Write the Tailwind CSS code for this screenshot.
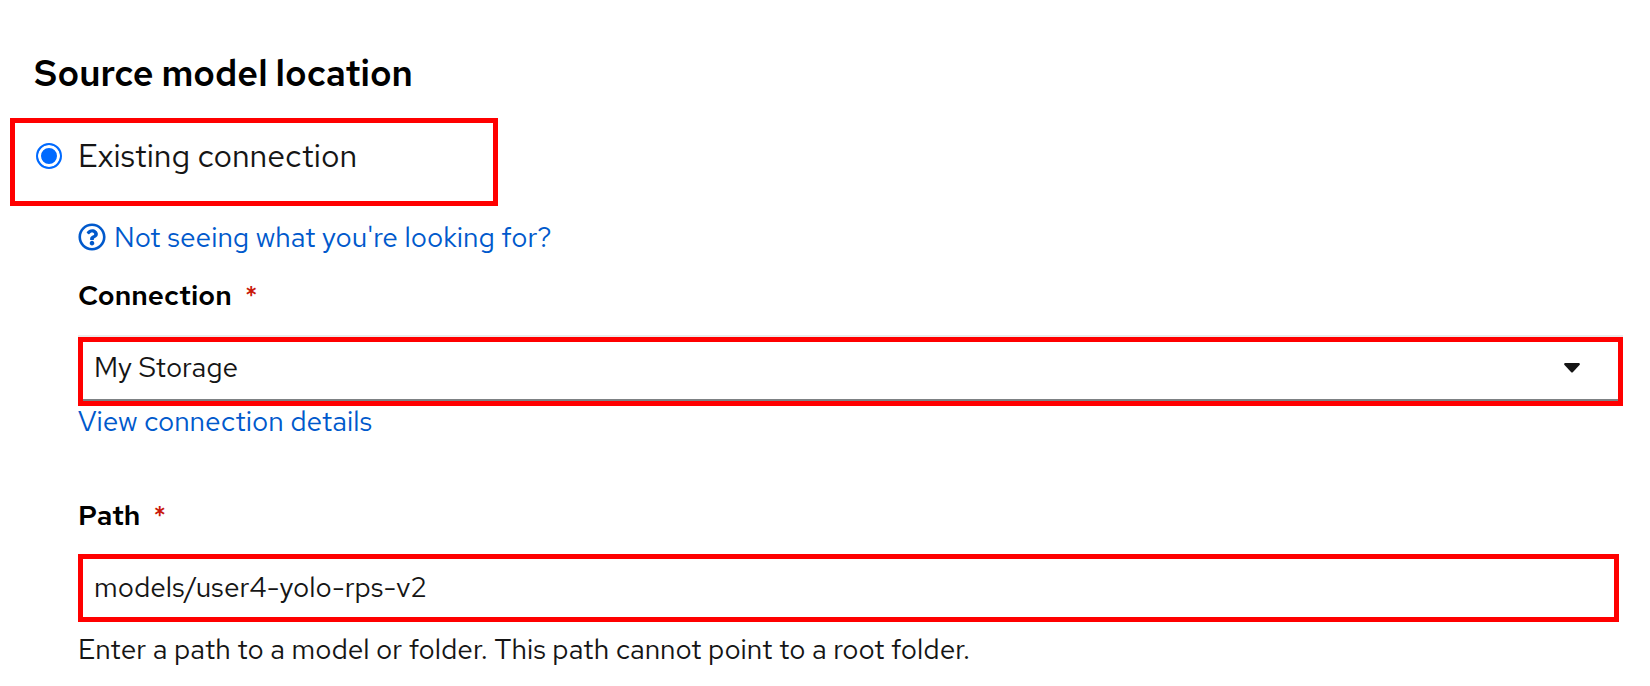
<!DOCTYPE html>
<html lang="en">
<head>
<meta charset="utf-8">
<meta name="viewport" content="width=device-width, initial-scale=1">
<title>Source model location</title>
<script src="https://cdn.jsdelivr.net/npm/@tailwindcss/browser@4"></script>
</head>
<body class="bg-white font-['Red_Hat_Text',Roboto,sans-serif] text-[28px] leading-8 text-[#151515]">
<main>
  <form class="pt-[49px] pr-[27px] pb-5 pl-[10px]">
    <h1 class="pl-6 text-[36px] leading-[48px] font-semibold text-black">Source model location</h1>
    <div class="mt-[21px] flex h-[88px] w-full max-w-[488px] items-start border-5 border-[#ff0000] pt-[13px] pl-[21px]">
      <label class="flex items-center gap-4 text-[32px] leading-10">
        <input type="radio" name="location" checked class="size-[26px] appearance-none rounded-full border-2 border-[#006aff] bg-[#006aff] p-0 shadow-[inset_0_0_0_3px_white]">
        <span>Existing connection</span>
      </label>
    </div>
    <div class="pl-[68px]">
      <a href="#" class="mt-[15px] flex items-center gap-2 text-[#0059cc]">
        <svg class="size-7 shrink-0" viewBox="0 0 512 512" fill="currentColor" aria-hidden="true"><path d="M256 8C119 8 8 119 8 256c0 137 111 248 248 248s248-111 248-248C504 119 393 8 256 8zm0 448c-110.500 0-200-89.400-200-200 0-110.500 89.500-200 200-200 110.500 0 200 89.500 200 200 0 110.500-89.400 200-200 200zm107.200-255.200c0 67.200-72.400 68.100-72.400 92.900v6.300c0 6.600-5.400 12-12 12h-45.600c-6.600 0-12-5.400-12-12v-8.700c0-35.700 27.100-50 47.600-61.500 17.600-9.800 28.300-16.500 28.300-29.600 0-17.200-22-28.700-39.800-28.700-23.200 0-33.900 11-49 30-4 5-11.300 6-16.500 2.100l-27.800-21.100c-5.100-3.900-6.300-11.100-2.600-16.400C184.800 131.500 214.900 112 261.800 112c49.100 0 101.400 38.300 101.400 88.800zM298 368c0 23.200-18.800 42-42 42s-42-18.800-42-42 18.800-42 42-42 42 18.800 42 42z"/></svg>
        <span>Not seeing what you're looking for?</span>
      </a>
      <label for="connection" class="mt-[26px] flex gap-[13px] font-semibold text-black">Connection <span class="font-medium text-[#c9190b]" aria-hidden="true">*</span></label>
      <div class="mt-[26px] grid border-5 border-[#ff0000] shadow-[0_-2px_0_#ececec]">
        <select id="connection" class="col-start-1 row-start-1 h-[59px] w-full appearance-none border-b-2 border-[#7d8184] bg-white pr-16 pb-2 pl-[11px] outline-none">
          <option>My Storage</option>
        </select>
        <svg class="pointer-events-none col-start-1 row-start-1 mt-[21px] mr-[38px] h-[10px] w-4 justify-self-end" viewBox="0 0 16 10" fill="#151515" aria-hidden="true"><path d="M1 0h14q1.500 0.500 0.500 2L9 9q-1 1-2 0L0.500 2Q-0.500 0.500 1 0z"/></svg>
      </div>
      <a href="#" class="-mt-px flex text-[#0059cc]">View connection details</a>
      <label for="path" class="mt-[62px] flex gap-[13px] font-semibold text-black">Path <span class="font-medium text-[#c9190b]" aria-hidden="true">*</span></label>
      <div class="mt-[23px] mr-1 border-5 border-[#ff0000]">
        <input id="path" type="text" value="models/user4-yolo-rps-v2" aria-describedby="path-help" class="block h-[58px] w-full bg-white px-[11px] pb-0.5 outline-none">
      </div>
      <p id="path-help" class="mt-[11px]">Enter a path to a model or folder. This path cannot point to a root folder.</p>
    </div>
  </form>
</main>
</body>
</html>
